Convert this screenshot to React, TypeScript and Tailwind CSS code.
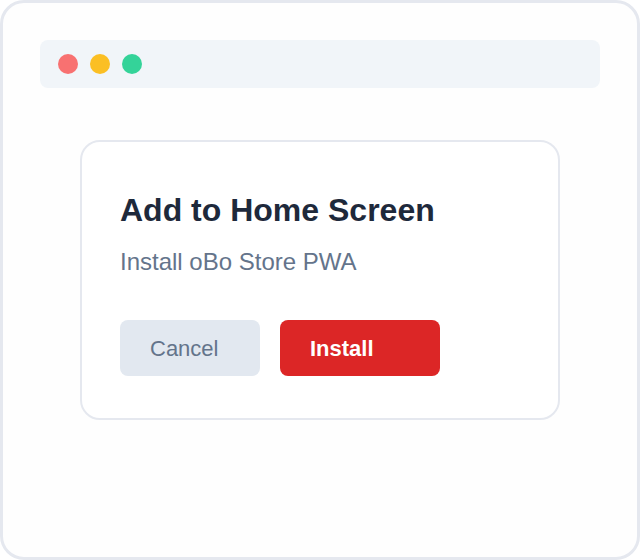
import React from "react";

const App: React.FC = () => {
  return (
    <div
      className="w-[640px] h-[560px] bg-white"
      style={{ fontFamily: '"Liberation Sans", Arial, sans-serif' }}
    >
      {/* Browser Frame */}
      <div className="w-full h-full border-[3px] border-[#e5e8ef] rounded-[24px] p-[37px] bg-[#fefefe]">
        {/* Title Bar */}
        <div className="h-12 w-full bg-[#f1f5f9] rounded-[8px] flex items-center gap-3 pl-[18px]">
          <span className="w-5 h-5 rounded-full bg-[#f87171]" />
          <span className="w-5 h-5 rounded-full bg-[#fbbf24]" />
          <span className="w-5 h-5 rounded-full bg-[#34d399]" />
        </div>

        {/* Dialog */}
        <div className="mt-[52px] ml-10 w-[480px] h-[280px] bg-white border-2 border-[#e5e8ef] rounded-[20px] pt-12 pl-[38px]">
          <h2 className="text-[32px] leading-[40px] font-bold text-[#1e293b]">
            Add to Home Screen
          </h2>
          <p className="mt-4 text-[24px] leading-[32px] text-[#64748b]">
            Install oBo Store PWA
          </p>
          <div className="mt-[42px] flex gap-5">
            <button className="w-[140px] h-14 rounded-[8px] bg-[#e2e8f0] text-[#64748b] text-[22px] text-left pl-[30px]">
              Cancel
            </button>
            <button className="w-[160px] h-14 rounded-[8px] bg-[#dc2626] text-white font-bold text-[22px] text-left pl-[30px]">
              Install
            </button>
          </div>
        </div>
      </div>
    </div>
  );
};

export default App;
